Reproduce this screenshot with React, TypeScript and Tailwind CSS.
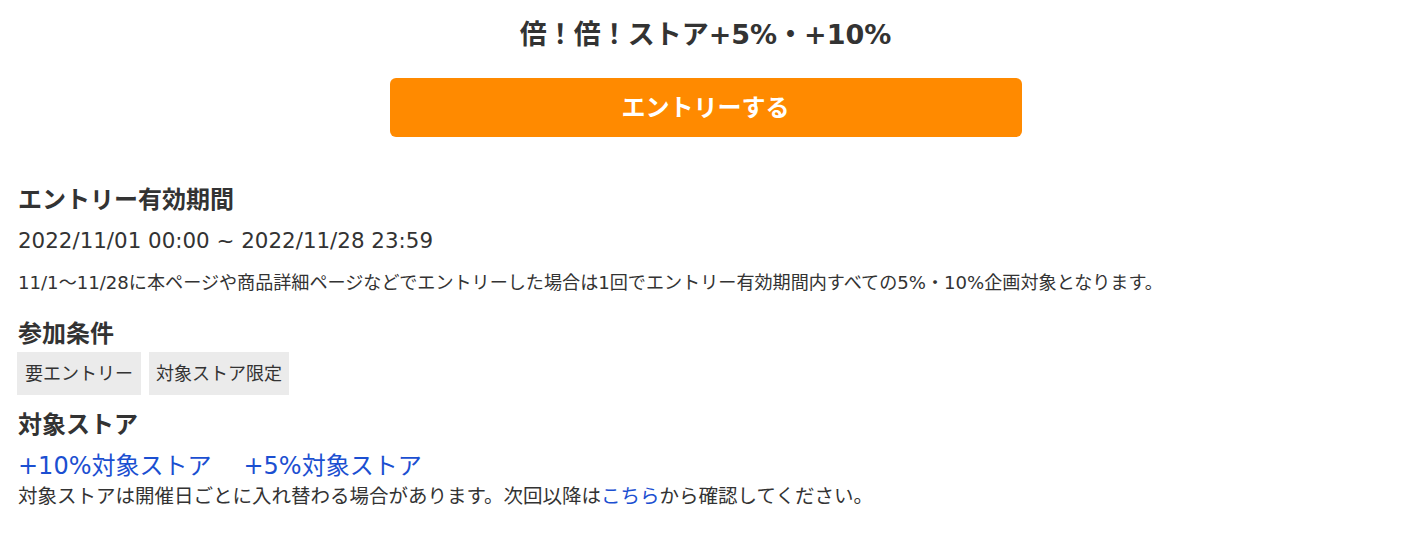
import React from "react";

export default function App() {
  return (
    <div
      className="w-[1411px] h-[538px] bg-white text-[#333333]"
      style={{ fontFamily: '"DejaVu Sans", "Noto Sans CJK JP", sans-serif' }}
    >
      <div className="pt-[17px] flex flex-col items-center">
        <h1 className="text-[27px] leading-[36px] font-bold text-[#333333]">倍！倍！ストア+5%・+10%</h1>
        <button className="mt-[25px] w-[632px] h-[59px] rounded-[6px] bg-[#ff8a00] text-white text-[24px] font-bold leading-none">
          エントリーする
        </button>
      </div>
      <div className="px-[18px] pt-[48px]">
        <h2 className="text-[24px] leading-[30px] font-bold">エントリー有効期間</h2>
        <p className="mt-[12px] text-[21.4px] leading-[28px]">2022/11/01 00:00 ~ 2022/11/28 23:59</p>
        <p className="mt-[16px] text-[18.1px] leading-[24px] whitespace-nowrap">
          11/1～11/28に本ページや商品詳細ページなどでエントリーした場合は1回でエントリー有効期間内すべての5%・10%企画対象となります。
        </p>
        <h2 className="mt-[24px] text-[24px] leading-[30px] font-bold">参加条件</h2>
        <div className="mt-[3px] flex gap-[8px] -ml-px">
          <span className="h-[43px] px-[8px] flex items-center bg-[#ebebeb] text-[18px]">要エントリー</span>
          <span className="h-[43px] px-[7px] flex items-center bg-[#ebebeb] text-[18px]">対象ストア限定</span>
        </div>
        <h2 className="mt-[15px] text-[24px] leading-[30px] font-bold">対象ストア</h2>
        <div className="mt-[11px] flex gap-[32px] text-[24px] leading-[30px] text-[#1b4fd1]">
          <a>+10%対象ストア</a>
          <a>+5%対象ストア</a>
        </div>
        <p className="mt-[2px] text-[19.5px] leading-[28px]">
          対象ストアは開催日ごとに入れ替わる場合があります。次回以降は<a className="text-[#1b4fd1]">こちら</a>から確認してください。
        </p>
      </div>
    </div>
  );
}
